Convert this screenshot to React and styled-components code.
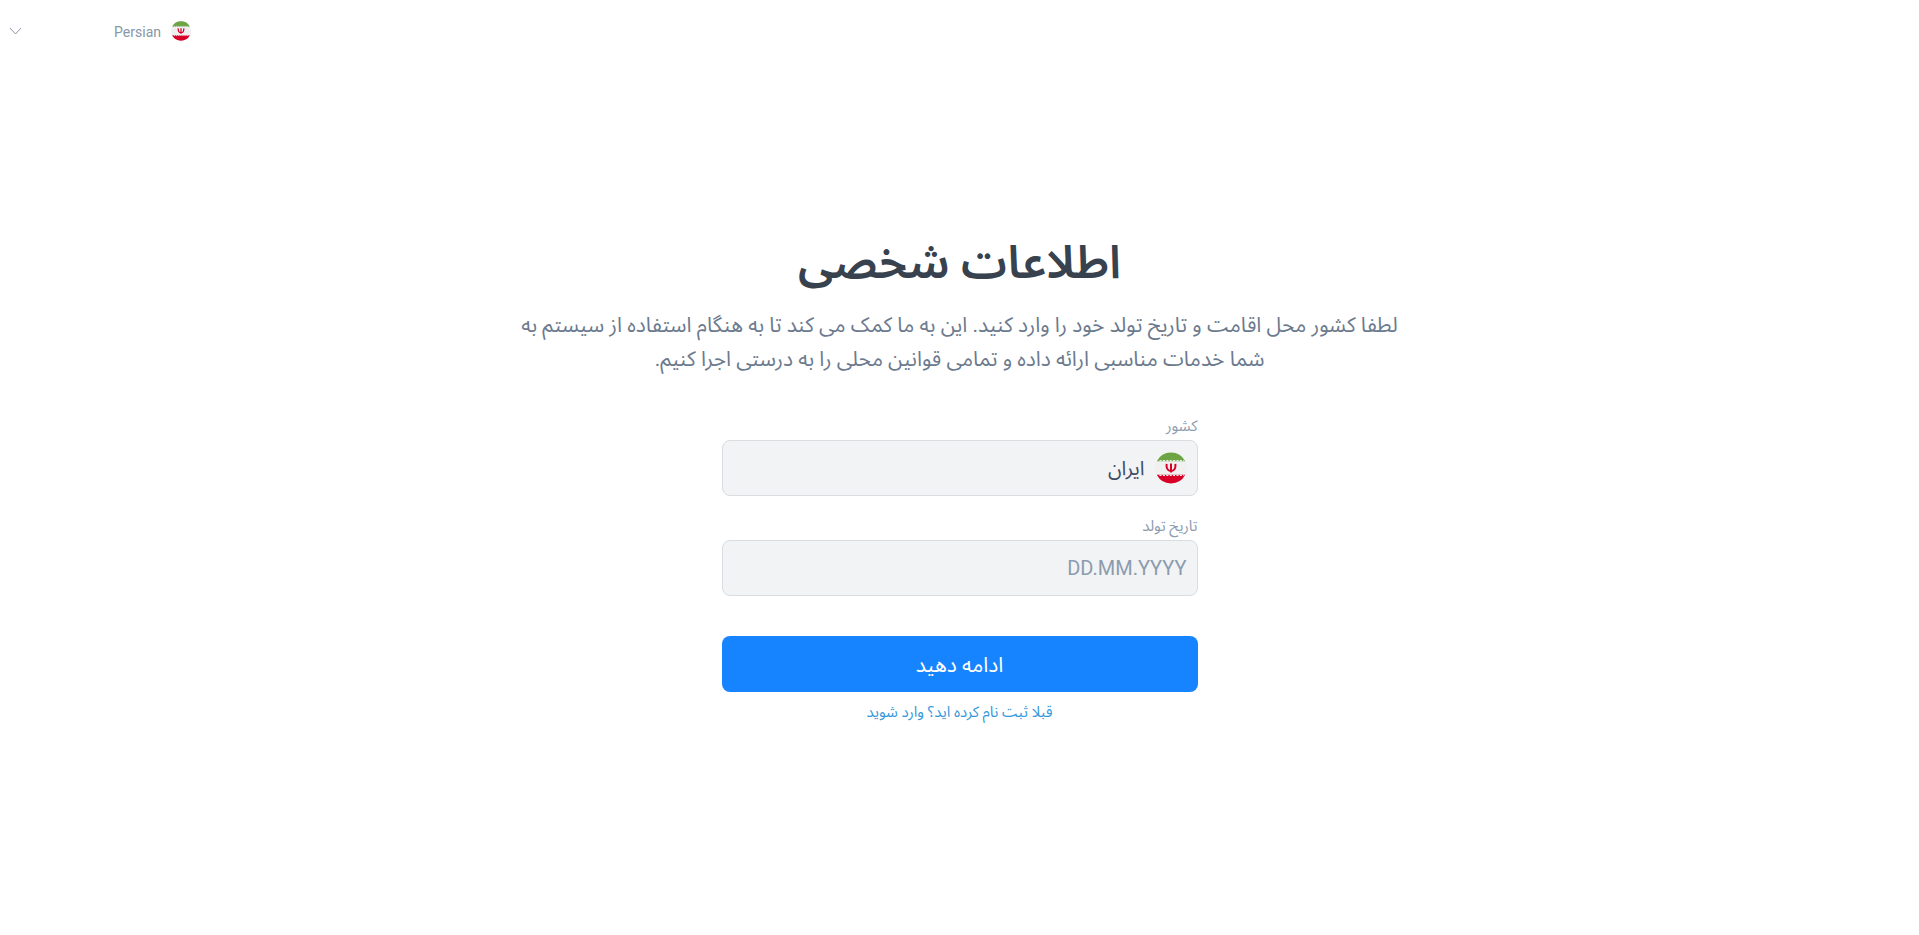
import React, { useState } from 'react';
import styled, { createGlobalStyle } from 'styled-components';

const texts = {
  language: 'Persian',
  title: 'اطلاعات شخصی',
  description: 'لطفا کشور محل اقامت و تاریخ تولد خود را وارد کنید. این به ما کمک می کند تا به هنگام استفاده از سیستم به شما خدمات مناسبی ارائه داده و تمامی قوانین محلی را به درستی اجرا کنیم.',
  country: 'کشور',
  countryName: 'ایران',
  birthDate: 'تاریخ تولد',
  submit: 'ادامه دهید',
  login: 'قبلا ثبت نام کرده اید؟ وارد شوید'
};

const GlobalStyle = createGlobalStyle`
  *, *::before, *::after {
    box-sizing: border-box;
  }

  body {
    margin: 0;
    background-color: #fff;
    font-family: Roboto, 'Noto Sans', 'Noto Sans Arabic', 'DejaVu Sans', sans-serif;
  }
`;

const StyledPage = styled.div`
  min-height: 100vh;
  display: flex;
  flex-direction: column;
`;

const StyledHeader = styled.header`
  display: flex;
  justify-content: flex-end;
  padding: 20px 9px;
`;

const StyledLanguage = styled.div`
  display: flex;
  align-items: center;
  gap: 10px;
  width: 182px;
  height: 22px;
  color: #8697a8;
`;

const StyledLanguageSelect = styled.select`
  flex: 1;
  min-width: 0;
  padding: 2px 0 0;
  border: 0;
  appearance: none;
  background-color: transparent;
  color: #8697a8;
  font-family: inherit;
  font-size: 14px;
  line-height: 22px;
  cursor: pointer;
`;

const StyledMain = styled.main`
  display: flex;
  flex-direction: column;
  align-items: center;
  padding: 160px 24px 40px;
`;

const StyledTitle = styled.h1`
  margin: 0;
  color: #37424e;
  font-size: 46px;
  font-weight: 600;
  line-height: 80px;
  text-align: center;
`;

const StyledDescription = styled.p`
  max-width: 884px;
  margin: 6px 0 0;
  color: #6c7a8e;
  font-size: 21px;
  line-height: 34px;
  text-align: center;
`;

const StyledForm = styled.form`
  display: flex;
  flex-direction: column;
  width: 100%;
  max-width: 476px;
  margin-top: 40px;
`;

const StyledField = styled.div`
  display: flex;
  flex-direction: column;
  margin-bottom: 20px;
`;

const StyledLabel = styled.label`
  margin-bottom: 4px;
  color: #8c9cae;
  font-size: 15px;
  line-height: 20px;
`;

const StyledControl = styled.div`
  display: flex;
  align-items: center;
  gap: 10px;
  height: 56px;
  padding: 0 10px;
  border: 1px solid #d8dde1;
  border-radius: 8px;
  background-color: #f1f3f5;
`;

const StyledSelect = styled.select`
  flex: 1;
  min-width: 0;
  height: 100%;
  padding: 0;
  border: 0;
  outline: 0;
  appearance: none;
  background-color: transparent;
  color: #3f4c63;
  font-family: inherit;
  font-size: 20px;
`;

const StyledInput = styled.input`
  flex: 1;
  min-width: 0;
  height: 100%;
  padding: 0;
  border: 0;
  outline: 0;
  background-color: transparent;
  color: #3f4c63;
  font-family: inherit;
  font-size: 20px;

  &::placeholder {
    color: #8c9cae;
    opacity: 1;
  }
`;

const StyledButton = styled.button`
  height: 56px;
  margin-top: 20px;
  padding: 2px 0 0;
  border: 0;
  border-radius: 8px;
  background-color: #1683ff;
  color: #fff;
  font-family: inherit;
  font-size: 21px;
  cursor: pointer;
`;

const StyledLink = styled.a`
  align-self: center;
  margin-top: 10px;
  color: #3498db;
  font-size: 15px;
  line-height: 20px;
  text-decoration: none;
`;

const StyledFlag = styled.svg`
  flex: none;
  width: ${({ $size }) => $size}px;
  height: ${({ $size }) => $size}px;
`;

const Flag = ({ size }) => (
  <StyledFlag $size={size} viewBox='0 0 32 32' aria-hidden='true'>
    <circle cx='16' cy='16' r='16' fill='#f0f0f0'/>
    <path d='M1.8 9.2A16 16 0 0 1 30.2 9.2Z' fill='#6da544'/>
    <path d='M1.8 22.8A16 16 0 0 0 30.2 22.8Z' fill='#d80027'/>
    <path d='M4.5 8.7H29' stroke='#f0f0f0' strokeWidth='1.2' strokeDasharray='2 1.4'/>
    <path d='M4.5 23.3H29' stroke='#f0f0f0' strokeWidth='1.2' strokeDasharray='2 1.4'/>
    <path d='M11.6 11.8C11.2 15.6 12.4 19 16 19.2C19.6 19 20.8 15.6 20.4 11.8M16 11.6V20.4' fill='none' stroke='#d80027' strokeWidth='2'/>
  </StyledFlag>
);

const Chevron = () => (
  <svg width='12' height='8' viewBox='0 0 12 8' fill='none' stroke='currentColor' aria-hidden='true'>
    <path d='M1 1L6.5 7L12 1'/>
  </svg>
);

const App = () => {

  const [ birthDate, setBirthDate ] = useState('');

  return (
    <StyledPage dir='rtl' lang='fa'>
      <GlobalStyle/>
      <StyledHeader>
        <StyledLanguage>
          <Flag size={20}/>
          <StyledLanguageSelect aria-label='Language'>
            <option>{texts.language}</option>
          </StyledLanguageSelect>
          <Chevron/>
        </StyledLanguage>
      </StyledHeader>
      <StyledMain>
        <StyledTitle>{texts.title}</StyledTitle>
        <StyledDescription>{texts.description}</StyledDescription>
        <StyledForm onSubmit={(e) => e.preventDefault()}>
          <StyledField>
            <StyledLabel htmlFor='country'>{texts.country}</StyledLabel>
            <StyledControl>
              <Flag size={32}/>
              <StyledSelect id='country'>
                <option>{texts.countryName}</option>
              </StyledSelect>
            </StyledControl>
          </StyledField>
          <StyledField>
            <StyledLabel htmlFor='birth-date'>{texts.birthDate}</StyledLabel>
            <StyledControl>
              <StyledInput id='birth-date' type='text' placeholder='DD.MM.YYYY' value={birthDate} onChange={(e) => setBirthDate(e.target.value)}/>
            </StyledControl>
          </StyledField>
          <StyledButton type='submit'>{texts.submit}</StyledButton>
          <StyledLink href='#login'>{texts.login}</StyledLink>
        </StyledForm>
      </StyledMain>
    </StyledPage>
  );
};

export default App;
